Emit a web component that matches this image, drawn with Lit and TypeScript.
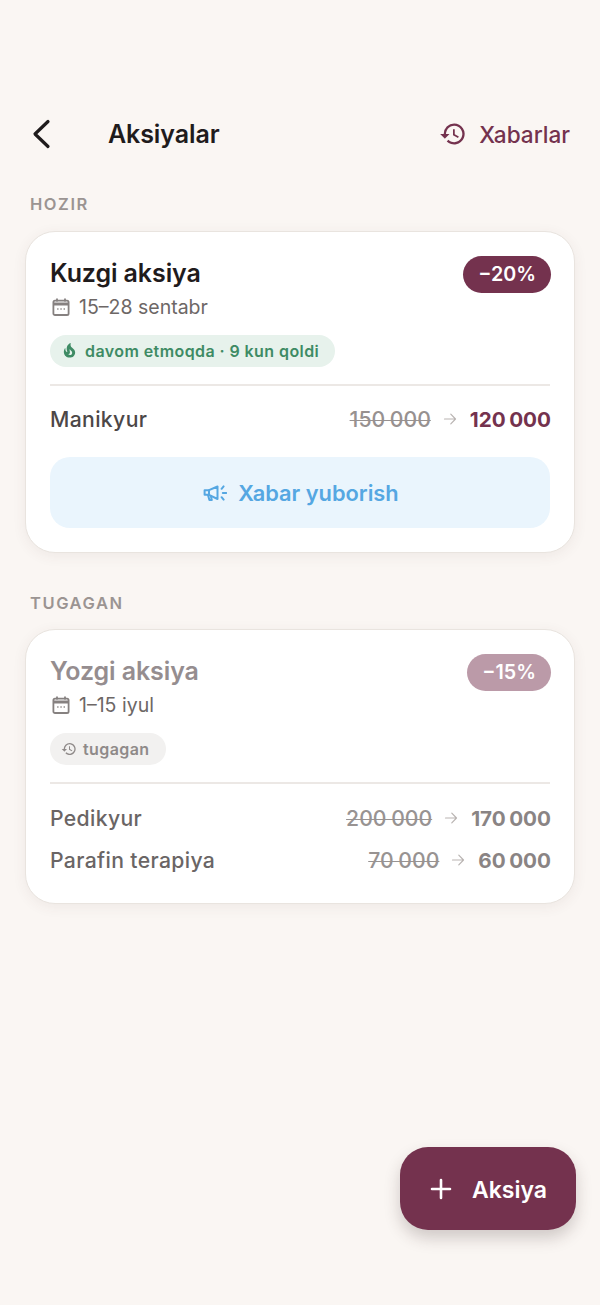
import { LitElement, html, css, svg } from "lit";
import { customElement } from "lit/decorators.js";

const historyIcon = (size: number) => html`<svg width=${size} height=${size} viewBox="0 0 24 24" fill="currentColor">
  <path d="M13 3a9 9 0 0 0-9 9H1l3.89 3.89.07.14L9 12H6a7 7 0 1 1 2.05 4.95l-1.42 1.42A9 9 0 1 0 13 3zm-1 5v5l4.25 2.52.77-1.28-3.52-2.09V8H12z"/>
</svg>`;

const calendarIcon = html`<svg width="20" height="20" viewBox="0 0 20 20" fill="none" stroke="currentColor">
  <rect x="2.400" y="3.600" width="15.200" height="14.400" rx="1.600" stroke-width="1.800"/>
  <path d="M2.400 7h15.200" stroke-width="3"/>
  <path d="M6 1.400v3M14 1.400v3" stroke-width="1.800"/>
  ${svg`<path d="M6.200 12h1.300M9.400 12h1.300M12.600 12h1.300" stroke-width="1.400"/>`}
</svg>`;

const flameIcon = html`<svg width="17" height="17" viewBox="0 0 24 24" fill="currentColor">
  <path d="M19.48 12.35c-1.57-4.08-7.16-4.3-5.81-10.23.1-.44-.37-.78-.75-.55C9.29 3.71 6.68 8 8.87 13.62c.18.46-.36.89-.75.59-1.81-1.37-2-3.34-1.84-4.75.06-.52-.62-.77-.91-.34C4.69 10.16 4 11.84 4 14.37c.38 5.6 5.11 7.32 6.81 7.54 2.43.31 5.06-.14 6.95-1.87 2.08-1.93 2.84-5.01 1.72-7.69zm-9.28 5.03c1.44-.35 2.18-1.39 2.38-2.31.33-1.43-.96-2.83-.09-5.09.33 1.87 3.27 3.04 3.27 5.08.08 2.53-2.66 4.7-5.56 2.32z"/>
</svg>`;

const megaphoneIcon = html`<svg width="26" height="24" viewBox="-2 0 26 24" fill="none" stroke="currentColor" stroke-width="2" stroke-linecap="round" stroke-linejoin="round">
  <path d="M1.600 9.200h4.400L14.500 5.500v12.500l-8.500-4.200H1.600z"/>
  <path d="M6 9.200v4.600M5 14l1.400 5h2.400l-1-4"/>
  <path d="M18.600 7.800l2-2.400M19.800 12h3.600M18.600 16.200l2 2.400"/>
</svg>`;

const arrowIcon = html`<svg class="arrow" width="14" height="14" viewBox="0 0 14 14" fill="none" stroke="currentColor" stroke-width="1.200" stroke-linecap="round" stroke-linejoin="round">
  <path d="M1.500 7h11M7.800 2.200 12.500 7l-4.700 4.800"/>
</svg>`;

interface PriceRow {
  name: string;
  oldPrice: string;
  newPrice: string;
}

interface Promo {
  title: string;
  dates: string;
  discount: string;
  status: string;
  rows: PriceRow[];
  ended?: boolean;
}

const active: Promo = {
  title: "Kuzgi aksiya",
  dates: "15–28 sentabr",
  discount: "−20%",
  status: "davom etmoqda · 9 kun qoldi",
  rows: [{ name: "Manikyur", oldPrice: "150 000", newPrice: "120 000" }],
};

const ended: Promo = {
  title: "Yozgi aksiya",
  dates: "1–15 iyul",
  discount: "−15%",
  status: "tugagan",
  ended: true,
  rows: [
    { name: "Pedikyur", oldPrice: "200 000", newPrice: "170 000" },
    { name: "Parafin terapiya", oldPrice: "70 000", newPrice: "60 000" },
  ],
};

@customElement("app-root")
export class AppRoot extends LitElement {
  static styles = css`
    :host {
      display: block;
      position: relative;
      width: 600px;
      height: 1305px;
      overflow: hidden;
      background: #faf6f3;
      font-family: Inter, "Noto Sans", sans-serif;
      color: #1f1b1c;
    }
    * {
      box-sizing: border-box;
    }
    .topbar {
      display: flex;
      align-items: center;
      height: 60px;
      margin-top: 104px;
      padding: 0 30px;
    }
    .back {
      display: flex;
      width: 78px;
    }
    .page-title {
      font-size: 25px;
      font-weight: 600;
      letter-spacing: -0.1px;
    }
    .history {
      display: flex;
      align-items: center;
      gap: 12px;
      margin-left: auto;
      color: #74324e;
      font-size: 22.600px;
      font-weight: 500;
    }
    .section {
      margin: 0;
      padding: 0 30px;
      font-size: 16.500px;
      font-weight: 600;
      line-height: 20px;
      letter-spacing: 1.550px;
      color: #9b9492;
    }
    .section.first {
      margin-top: 30px;
    }
    .section.second {
      margin-top: 40px;
    }
    .card {
      margin: 17px 25px 0;
      padding: 24px;
      background: #fff;
      border: 1px solid #e9e4df;
      border-radius: 30px;
      box-shadow: 0 3px 14px rgba(80, 60, 50, 0.07);
    }
    .card-head {
      display: flex;
      justify-content: space-between;
      align-items: flex-start;
    }
    .title {
      margin-bottom: 1px;
      font-size: 25px;
      font-weight: 600;
      line-height: 35px;
      letter-spacing: -0.1px;
    }
    .dates {
      display: flex;
      align-items: center;
      gap: 8px;
      height: 30px;
      padding-left: 1px;
      font-size: 19.500px;
      color: #6d6766;
    }
    .dates svg {
      color: #868180;
    }
    .discount {
      margin-right: -1px;
      padding: 0 15px;
      height: 37px;
      border-radius: 19px;
      background: #74324e;
      color: #fff;
      font-size: 19.700px;
      font-weight: 600;
      line-height: 37px;
    }
    .status {
      display: inline-flex;
      align-items: center;
      gap: 7px;
      height: 31.500px;
      margin-top: 13px;
      padding: 0 16px 0 11px;
      border-radius: 16px;
      background: #e7f2ec;
      color: #3e8b64;
      font-size: 16px;
      font-weight: 600;
      letter-spacing: 0.420px;
    }
    .divider {
      height: 2px;
      margin-top: 17.500px;
      background: #ece8e5;
    }
    .rows {
      display: flex;
      flex-direction: column;
      gap: 12px;
      margin-top: 18px;
    }
    .row {
      display: flex;
      align-items: center;
      justify-content: space-between;
      height: 30px;
      font-size: 21.200px;
      font-weight: 500;
      letter-spacing: 0.350px;
      color: #4c4747;
    }
    .prices {
      display: flex;
      align-items: center;
      margin-right: -1px;
      letter-spacing: 0;
    }
    .old {
      font-size: 21.200px;
      font-weight: 500;
      word-spacing: -1px;
      color: #979190;
      text-decoration: line-through;
      text-decoration-thickness: 1px;
    }
    .arrow {
      margin: 0 13px 0 12px;
      color: #b9b4b2;
    }
    .new {
      font-size: 20.700px;
      font-weight: 700;
      word-spacing: -1.500px;
      color: #74324e;
    }
    .send {
      display: flex;
      align-items: center;
      justify-content: center;
      gap: 11px;
      width: 100%;
      height: 71px;
      margin-top: 23px;
      border: none;
      border-radius: 20px;
      background: #eaf5fd;
      color: #55a7e2;
      font-family: inherit;
      font-size: 21.800px;
      font-weight: 600;
    }
    .card.ended {
      margin-top: 16px;
      padding-bottom: 28px;
    }
    .ended .title {
      color: #958d8f;
    }
    .ended .discount {
      background: #bb9aa8;
    }
    .ended .status {
      background: #f2f1f0;
      color: #8f8a89;
      gap: 6px;
    }
    .ended .rows {
      margin-top: 19px;
    }
    .ended .new {
      color: #8a8484;
    }
    .ended .row {
      color: #6a6565;
    }
    .ended .old {
      color: #989392;
    }
    .fab {
      position: absolute;
      left: 400px;
      top: 1147px;
      display: flex;
      align-items: center;
      gap: 19px;
      width: 176px;
      height: 83px;
      padding: 0 0 0 29px;
      border: none;
      border-radius: 28px;
      background: #74324e;
      color: #fff;
      font-family: inherit;
      font-size: 23px;
      font-weight: 600;
      box-shadow: 0 8px 16px rgba(60, 40, 40, 0.22);
    }
    .fab span {
      margin-top: 3px;
    }
  `;

  private renderCard(p: Promo, isActive: boolean) {
    return html`
      <div class="card ${p.ended ? "ended" : ""}">
        <div class="card-head">
          <div>
            <div class="title">${p.title}</div>
            <div class="dates">${calendarIcon}<span>${p.dates}</span></div>
          </div>
          <div class="discount">${p.discount}</div>
        </div>
        <div class="status">${p.ended ? historyIcon(16) : flameIcon}<span>${p.status}</span></div>
        <div class="divider"></div>
        <div class="rows">
          ${p.rows.map(
            (r) => html`
              <div class="row">
                <span>${r.name}</span>
                <span class="prices">
                  <span class="old">${r.oldPrice}</span>${arrowIcon}<span class="new">${r.newPrice}</span>
                </span>
              </div>
            `,
          )}
        </div>
        ${isActive ? html`<button class="send">${megaphoneIcon}<span>Xabar yuborish</span></button>` : ""}
      </div>
    `;
  }

  render() {
    return html`
      <div class="topbar">
        <span class="back">
          <svg width="24" height="32" viewBox="0 0 24 32" fill="none" stroke="#1f1b1c" stroke-width="3.200" stroke-linecap="round" stroke-linejoin="round">
            <path d="M18 3.500 5 16l13 12.500"/>
          </svg>
        </span>
        <span class="page-title">Aksiyalar</span>
        <span class="history">${historyIcon(28)}<span>Xabarlar</span></span>
      </div>
      <p class="section first">HOZIR</p>
      ${this.renderCard(active, true)}
      <p class="section second">TUGAGAN</p>
      ${this.renderCard(ended, false)}
      <button class="fab">
        <svg width="24" height="24" viewBox="0 0 24 24" fill="none" stroke="#fff" stroke-width="2.600" stroke-linecap="round">
          <path d="M12 3v18M3 12h18"/>
        </svg>
        <span>Aksiya</span>
      </button>
    `;
  }
}
